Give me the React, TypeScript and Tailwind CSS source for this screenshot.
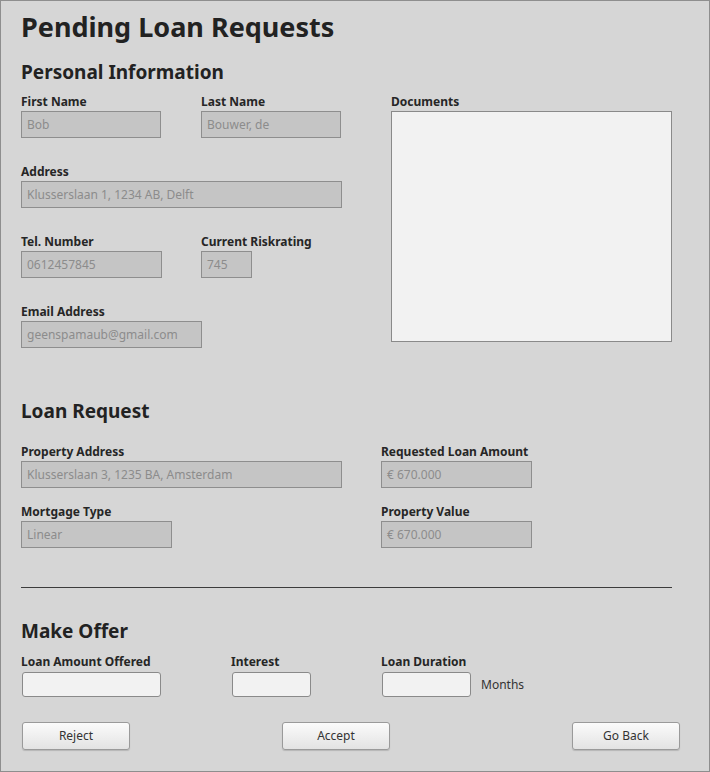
import React from 'react';

// Read-only field used in the request details
const ReadField: React.FC<{ label: string; value: string; w: string }> = ({ label, value, w }) => (
  <div className="flex flex-col">
    <span className="text-[12px] leading-[12px] font-bold text-[#262626]">{label}</span>
    <div
      className={`${w} mt-[3px] h-[27px] border border-[#8e8e8e] bg-[#c5c5c5] px-[5px] flex items-center text-[12px] text-[#8c8c8c]`}
    >
      {value}
    </div>
  </div>
);

// Editable input for the offer section
const OfferField: React.FC<{ label: string; w: string; suffix?: string }> = ({ label, w, suffix }) => (
  <div className="flex flex-col">
    <span className="text-[12px] leading-[12px] font-bold text-[#262626]">{label}</span>
    <div className="mt-[4px] flex items-center">
      <input
        className={`${w} ml-[1px] h-[25px] rounded-[3px] border border-[#8a8a8a] bg-[#f2f2f2] outline-none`}
      />
      {suffix && <span className="ml-[10px] text-[12px] text-[#333]">{suffix}</span>}
    </div>
  </div>
);

const Btn: React.FC<{ label: string; className?: string }> = ({ label, className = '' }) => (
  <button
    className={`${className} w-[108px] h-[28px] rounded-[3px] border border-[#9a9a9a] bg-gradient-to-b from-[#fbfbfb] to-[#e3e3e3] shadow-[0_1px_1px_rgba(0,0,0,0.15)] text-[12px] text-[#333]`}
  >
    {label}
  </button>
);

const App: React.FC = () => {
  return (
    <div className="w-[710px] h-[772px] border border-[#8e8e8e] bg-[#d6d6d6] pl-5 pt-[12px] font-['Noto_Sans','Open_Sans',sans-serif] text-[#222]">
      <h1 className="text-[27px] leading-[28px] font-bold">Pending Loan Requests</h1>

      {/* Personal information */}
      <h2 className="mt-[21px] text-[19px] leading-[20px] font-bold">Personal Information</h2>
      <div className="mt-[14px] flex">
        <div className="w-[370px] flex flex-col gap-[28px]">
          <div className="flex gap-[40px]">
            <ReadField label="First Name" value="Bob" w="w-[140px]" />
            <ReadField label="Last Name" value="Bouwer, de" w="w-[140px]" />
          </div>
          <ReadField label="Address" value="Klusserslaan 1, 1234 AB, Delft" w="w-[321px]" />
          <div className="flex gap-[39px]">
            <ReadField label="Tel. Number" value="0612457845" w="w-[141px]" />
            <ReadField label="Current Riskrating" value="745" w="w-[51px]" />
          </div>
          <ReadField label="Email Address" value="geenspamaub@gmail.com" w="w-[181px]" />
        </div>
        <div className="flex flex-col">
          <span className="text-[12px] leading-[12px] font-bold text-[#262626]">Documents</span>
          <div className="mt-[3px] w-[281px] h-[231px] border border-[#8a8a8a] bg-[#f2f2f2]" />
        </div>
      </div>

      {/* Loan request */}
      <h2 className="mt-[53px] text-[19px] leading-[20px] font-bold">Loan Request</h2>
      <div className="mt-[25px] grid grid-cols-[360px_200px] gap-y-[18px]">
        <ReadField label="Property Address" value="Klusserslaan 3, 1235 BA, Amsterdam" w="w-[321px]" />
        <ReadField label="Requested Loan Amount" value="€ 670.000" w="w-[151px]" />
        <ReadField label="Mortgage Type" value="Linear" w="w-[151px]" />
        <ReadField label="Property Value" value="€ 670.000" w="w-[151px]" />
      </div>

      <div className="mt-[39px] w-[651px] h-px bg-[#3c3c3c]" />

      {/* Make offer */}
      <h2 className="mt-[33px] text-[19px] leading-[20px] font-bold">Make Offer</h2>
      <div className="mt-[15px] flex">
        <div className="w-[210px]">
          <OfferField label="Loan Amount Offered" w="w-[139px]" />
        </div>
        <div className="w-[150px]">
          <OfferField label="Interest" w="w-[79px]" />
        </div>
        <OfferField label="Loan Duration" w="w-[89px]" suffix="Months" />
      </div>

      <div className="mt-[25px] flex pl-[1px]">
        <Btn label="Reject" />
        <Btn label="Accept" className="ml-[152px]" />
        <Btn label="Go Back" className="ml-[182px]" />
      </div>
    </div>
  );
};

export default App;
